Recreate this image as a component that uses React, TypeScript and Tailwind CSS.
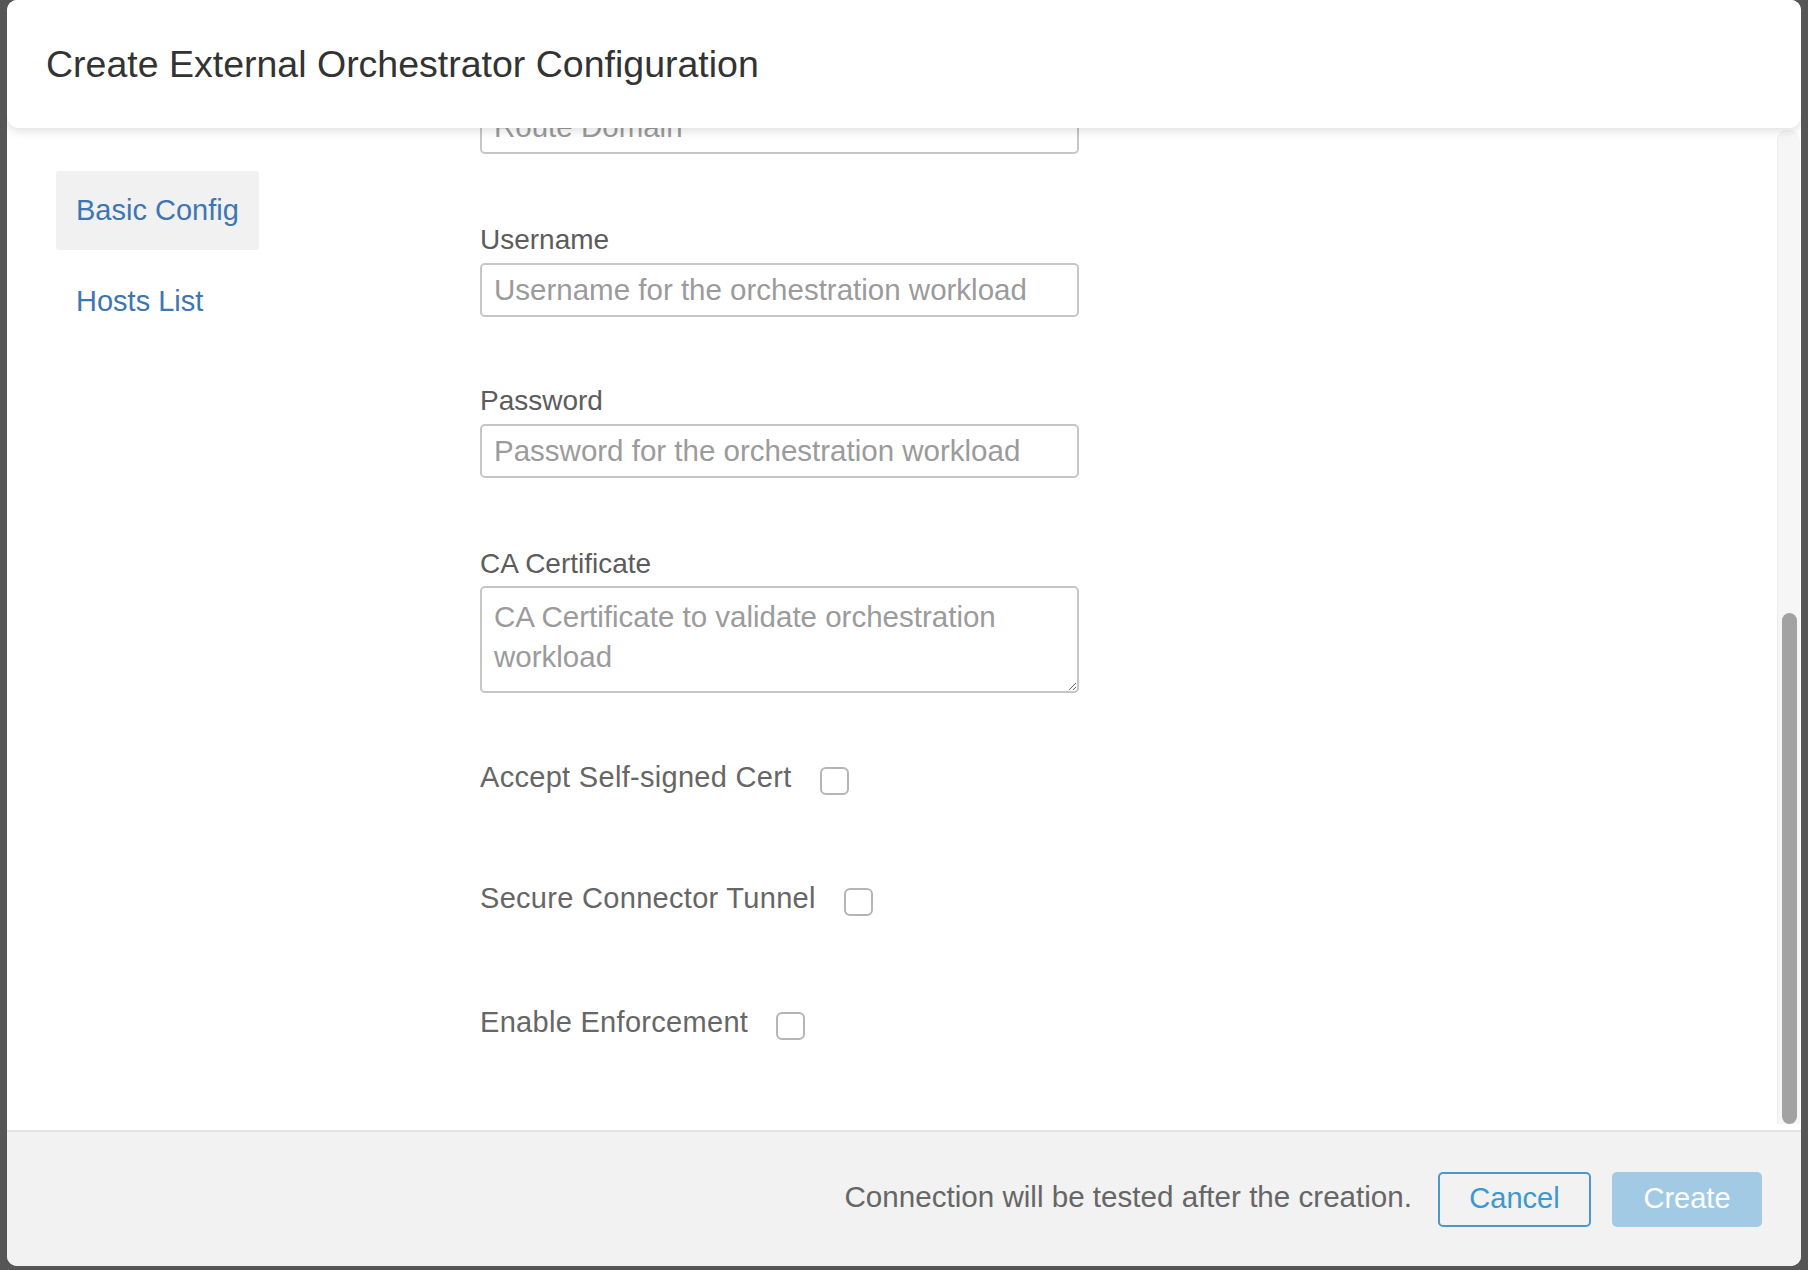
import { useState } from "react"

const Field = ({ label, placeholder, top }: { label: string; placeholder: string; top: string }) => {
  return (
    <div className={top}>
      <label className="block text-[28px] leading-[32px] text-[#5c5c5c]">{label}</label>
      <input
        type="text"
        placeholder={placeholder}
        className="mt-[7px] block w-[599px] h-[54px] px-[12px] border-2 border-[#c6c6c6] rounded-[5px] bg-white text-[29.5px] text-[#333] placeholder:text-[#9b9b9b] outline-none"
      />
    </div>
  )
}

const CheckRow = ({ label, top }: { label: string; top: string }) => {
  const [checked, setChecked] = useState(false)
  return (
    <label className={`flex items-center h-[32px] gap-[28px] ${top}`}>
      <span className="text-[29px] text-[#666666] tracking-[0.3px]">{label}</span>
      <input
        type="checkbox"
        checked={checked}
        onChange={() => setChecked(!checked)}
        className="appearance-none w-[29px] h-[28px] border-2 border-[#b5b5b5] rounded-[6px] bg-white mt-[5px]"
      />
    </label>
  )
}

const App = () => {
  const [tab, setTab] = useState("basic")

  return (
    <div className="h-[1270px] bg-[#565656] px-[7px] pb-[4px] font-['Liberation_Sans',Arial,sans-serif]">
      <div className="h-full flex flex-col bg-white rounded-[10px] overflow-hidden">
        <div className="relative z-10 h-[128px] shrink-0 bg-white rounded-b-[12px] shadow-[0_3px_10px_rgba(0,0,0,0.13)] flex items-center pl-[39px]">
          <h1 className="text-[37.5px] text-[#333333]">Create External Orchestrator Configuration</h1>
        </div>

        <div className="flex-1 min-h-0 flex">
          <nav className="w-[252px] shrink-0 pl-[49px] pt-[43px]">
            <button
              onClick={() => setTab("basic")}
              className={`block w-[203px] h-[79px] rounded-[3px] pl-[20px] text-left text-[29px] text-[#3d76b3] ${tab === "basic" ? "bg-[#f1f1f1]" : ""}`}
            >
              Basic Config
            </button>
            <button
              onClick={() => setTab("hosts")}
              className={`mt-[12px] block w-[203px] h-[79px] rounded-[3px] pl-[20px] text-left text-[29px] text-[#3d76b3] ${tab === "hosts" ? "bg-[#f1f1f1]" : ""}`}
            >
              Hosts List
            </button>
          </nav>

          <div className="flex-1 min-w-0 overflow-hidden pl-[221px]">
            <input
              type="text"
              placeholder="Route Domain"
              className="-mt-[28px] block w-[599px] h-[54px] px-[12px] border-2 border-[#c6c6c6] rounded-[5px] bg-white text-[29.5px] placeholder:text-[#9b9b9b] outline-none"
            />
            <Field top="mt-[70px]" label="Username" placeholder="Username for the orchestration workload" />
            <Field top="mt-[68px]" label="Password" placeholder="Password for the orchestration workload" />
            <div className="mt-[70px]">
              <label className="block text-[28px] leading-[32px] text-[#5c5c5c]">CA Certificate</label>
              <textarea
                placeholder="CA Certificate to validate orchestration workload"
                className="mt-[6px] block w-[599px] h-[107px] px-[12px] pt-[9px] border-2 border-[#c6c6c6] rounded-[5px] bg-white text-[29.5px] leading-[40px] placeholder:text-[#9b9b9b] outline-none"
              />
            </div>
            <CheckRow top="mt-[69px]" label="Accept Self-signed Cert" />
            <CheckRow top="mt-[89px]" label="Secure Connector Tunnel" />
            <CheckRow top="mt-[92px]" label="Enable Enforcement" />
          </div>

          <div className="w-[24px] shrink-0 pt-[2px] pb-[6px] pr-[1px]">
            <div className="h-full flex flex-col justify-end bg-[#f6f6f6] border-l border-[#ececec] rounded-t-[10px] pl-[4px] pr-[3px]">
              <div className="h-[511px] rounded-full bg-[#a2a2a2]" />
            </div>
          </div>
        </div>

        <div className="h-[136px] shrink-0 bg-[#f2f2f2] border-t-2 border-[#e3e3e3] flex items-center justify-end pr-[39px]">
          <span className="text-[29.6px] text-[#666666] -mt-[4px]">Connection will be tested after the creation.</span>
          <button className="ml-[26px] w-[153px] h-[55px] border-2 border-[#4a98cc] rounded-[5px] text-[29px] text-[#3d98d0]">
            Cancel
          </button>
          <button className="ml-[21px] w-[150px] h-[55px] rounded-[5px] bg-[#a2cae4] text-[29px] text-white">
            Create
          </button>
        </div>
      </div>
    </div>
  )
}

export default App
